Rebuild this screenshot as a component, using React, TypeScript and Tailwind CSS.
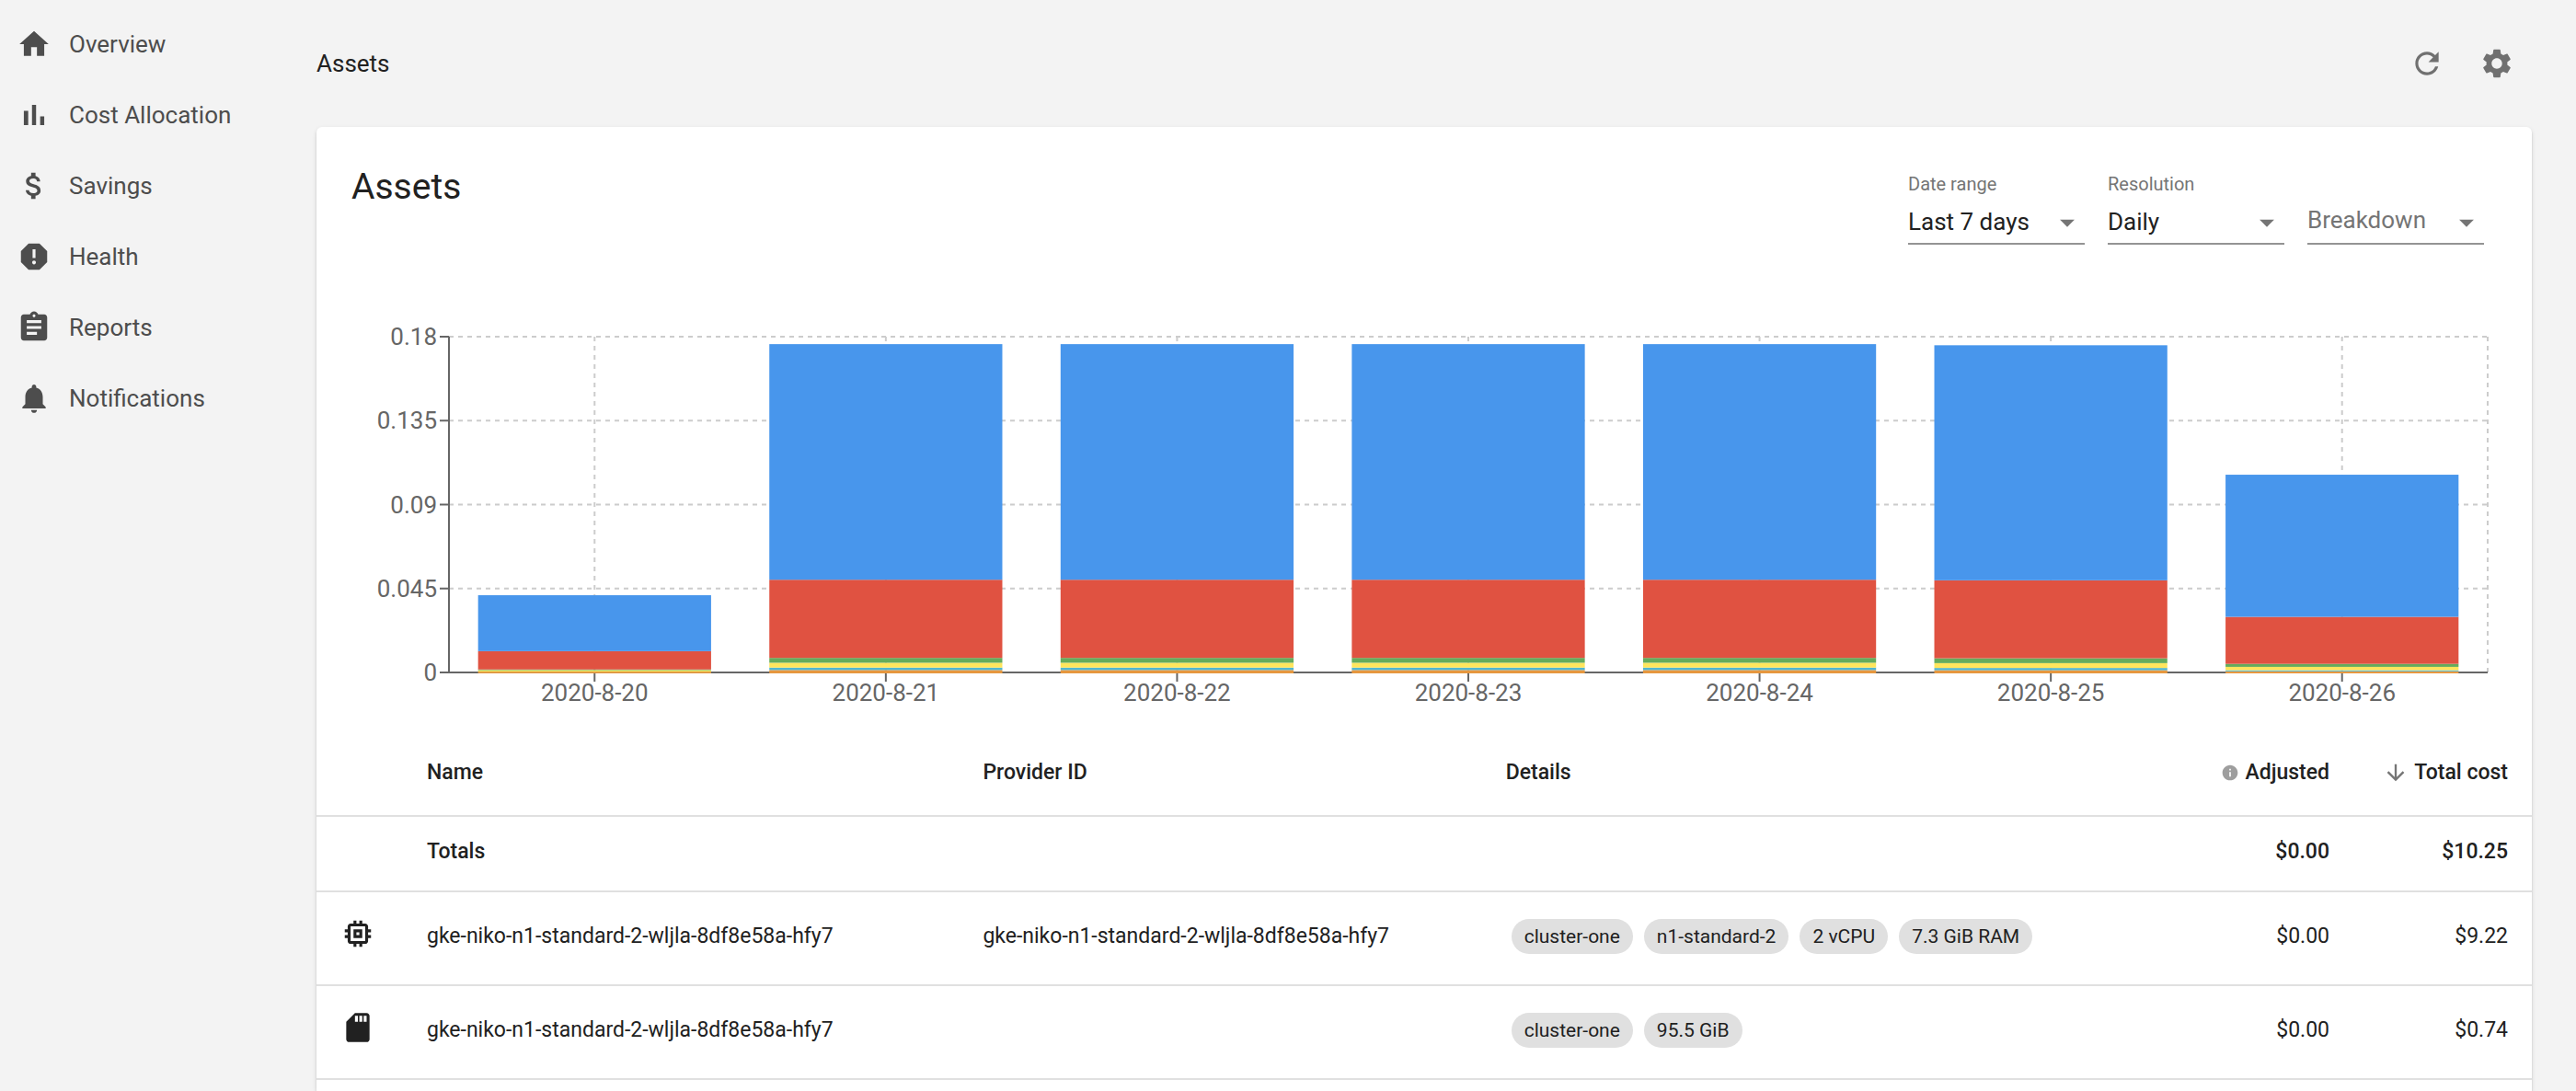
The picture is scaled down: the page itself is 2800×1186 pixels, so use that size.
import React from "react";

const PATHS = {
  home: "M10 20v-6h4v6h5v-8h3L12 3 2 12h3v8z",
  bars: "M5 9.2h3V19H5zM10.6 5h2.8v14h-2.8zm5.6 8H19v6h-2.8z",
  money:
    "M11.8 10.9c-2.27-.59-3-1.2-3-2.15 0-1.09 1.01-1.85 2.7-1.85 1.78 0 2.44.85 2.5 2.1h2.21c-.07-1.72-1.12-3.3-3.21-3.81V3h-3v2.16c-1.94.42-3.5 1.68-3.5 3.61 0 2.31 1.91 3.46 4.7 4.13 2.5.6 3 1.48 3 2.41 0 .69-.49 1.79-2.7 1.79-2.06 0-2.87-.92-2.98-2.1h-2.2c.12 2.19 1.76 3.42 3.68 3.83V21h3v-2.15c1.95-.37 3.5-1.5 3.5-3.55 0-2.84-2.43-3.81-4.7-4.4z",
  report:
    "M15.73 3H8.27L3 8.27v7.46L8.27 21h7.46L21 15.73V8.27L15.73 3zM12 17.3c-.72 0-1.3-.58-1.3-1.3 0-.72.58-1.3 1.3-1.3.72 0 1.3.58 1.3 1.3 0 .72-.58 1.3-1.3 1.3zm1-4.3h-2V7h2v6z",
  assignment:
    "M19 3h-4.18C14.4 1.84 13.3 1 12 1c-1.3 0-2.4.84-2.82 2H5c-1.1 0-2 .9-2 2v14c0 1.1.9 2 2 2h14c1.1 0 2-.9 2-2V5c0-1.1-.9-2-2-2zm-7 0c.55 0 1 .45 1 1s-.45 1-1 1-1-.45-1-1 .45-1 1-1zm2 14H7v-2h7v2zm3-4H7v-2h10v2zm0-4H7V7h10v2z",
  bell: "M12 22c1.1 0 2-.9 2-2h-4c0 1.1.89 2 2 2zm6-6v-5c0-3.07-1.64-5.64-4.5-6.32V4c0-.83-.67-1.5-1.5-1.5s-1.5.67-1.5 1.5v.68C7.63 5.36 6 7.92 6 11v5l-2 2v1h16v-1l-2-2z",
  refresh:
    "M17.65 6.35C16.2 4.9 14.21 4 12 4c-4.42 0-7.99 3.58-7.99 8s3.57 8 7.99 8c3.73 0 6.84-2.55 7.73-6h-2.08c-.82 2.33-3.04 4-5.65 4-3.31 0-6-2.69-6-6s2.69-6 6-6c1.66 0 3.14.69 4.22 1.78L13 11h7V4l-2.35 2.35z",
  settings:
    "M19.14,12.94c0.04-0.3,0.06-0.61,0.06-0.94c0-0.32-0.02-0.64-0.07-0.94l2.03-1.58c0.18-0.14,0.23-0.41,0.12-0.61l-1.92-3.32c-0.12-0.22-0.37-0.29-0.59-0.22l-2.39,0.96c-0.5-0.38-1.03-0.7-1.62-0.94L14.4,2.81c-0.04-0.24-0.24-0.41-0.48-0.41h-3.84c-0.24,0-0.43,0.17-0.47,0.41L9.25,5.35C8.66,5.59,8.12,5.92,7.63,6.29L5.24,5.33c-0.22-0.08-0.47,0-0.59,0.22L2.74,8.87C2.62,9.08,2.66,9.34,2.86,9.48l2.03,1.58C4.84,11.36,4.8,11.69,4.8,12s0.02,0.64,0.07,0.94l-2.03,1.58c-0.18,0.14-0.23,0.41-0.12,0.61l1.92,3.32c0.12,0.22,0.37,0.29,0.59,0.22l2.39-0.96c0.5,0.38,1.03,0.7,1.62,0.94l0.36,2.54c0.05,0.24,0.24,0.41,0.48,0.41h3.84c0.24,0,0.44-0.17,0.47-0.41l0.36-2.54c0.59-0.24,1.13-0.56,1.62-0.94l2.39,0.96c0.22,0.08,0.47,0,0.59-0.22l1.92-3.32c0.12-0.22,0.07-0.47-0.12-0.61L19.14,12.94z M12,15.6c-1.98,0-3.6-1.62-3.6-3.6s1.62-3.6,3.6-3.6s3.6,1.62,3.6,3.6S13.98,15.6,12,15.6z",
  dropDown: "M7 10l5 5 5-5z",
  info: "M12 2C6.48 2 2 6.48 2 12s4.48 10 10 10 10-4.48 10-10S17.52 2 12 2zm1 15h-2v-6h2v6zm0-8h-2V7h2v2z",
  arrowDown: "M20 12l-1.41-1.41L13 16.17V4h-2v12.17l-5.58-5.59L4 12l8 8 8-8z",
  memory:
    "M15 9H9v6h6V9zm-2 4h-2v-2h2v2zm8-2V9h-2V7c0-1.1-.9-2-2-2h-2V3h-2v2h-2V3H9v2H7c-1.1 0-2 .9-2 2v2H3v2h2v2H3v2h2v2c0 1.1.9 2 2 2h2v2h2v-2h2v2h2v-2h2c1.1 0 2-.9 2-2v-2h2v-2h-2v-2h2zm-4 6H7V7h10v10z",
  sdCard:
    "M18 2h-8L4.02 8 4 20c0 1.1.9 2 2 2h12c1.1 0 2-.9 2-2V4c0-1.1-.9-2-2-2zm-6 6h-2V4h2v4zm3 0h-2V4h2v4zm3 0h-2V4h2v4z",
};

type IconName = keyof typeof PATHS;

function Icon({ name, className = "size-[38px]" }: { name: IconName; className?: string }) {
  return (
    <svg viewBox="0 0 24 24" fill="currentColor" aria-hidden="true" className={`shrink-0 ${className}`}>
      <path d={PATHS[name]} />
    </svg>
  );
}

const NAV: { icon: IconName; label: string }[] = [
  { icon: "home", label: "Overview" },
  { icon: "bars", label: "Cost Allocation" },
  { icon: "money", label: "Savings" },
  { icon: "report", label: "Health" },
  { icon: "assignment", label: "Reports" },
  { icon: "bell", label: "Notifications" },
];

function Sidebar() {
  return (
    <nav className="w-[344px] shrink-0 pt-[9px]">
      <ul>
        {NAV.map((item) => (
          <li key={item.label}>
            <a href="#" className="flex h-[77px] items-center gap-[19px] px-[18px] text-[#4d4d4d]">
              <Icon name={item.icon} />
              {item.label}
            </a>
          </li>
        ))}
      </ul>
    </nav>
  );
}

function Select({ id, label, options }: { id: string; label: string; options: string[] }) {
  return (
    <div className="w-[192px]">
      <label htmlFor={id} className="block h-6 text-[20px] leading-6 text-[#757575]">
        {label}
      </label>
      <div className="relative mt-2">
        <select
          id={id}
          className="h-[46px] w-full appearance-none rounded-none border-b-2 border-[#949494] bg-transparent pb-[2px] text-[#212121] outline-none"
        >
          {options.map((o) => (
            <option key={o}>{o}</option>
          ))}
        </select>
        <span className="pointer-events-none absolute top-[3px] right-0 text-[#757575]">
          <Icon name="dropDown" />
        </span>
      </div>
    </div>
  );
}

function BreakdownSelect() {
  return (
    <div className="w-[192px] pt-8">
      <div className="relative">
        <select
          aria-label="Breakdown"
          className="h-[46px] w-full appearance-none rounded-none border-b-2 border-[#949494] bg-transparent pb-[6px] text-[#757575] outline-none"
        >
          <option>Breakdown</option>
        </select>
        <span className="pointer-events-none absolute top-[3px] right-0 text-[#757575]">
          <Icon name="dropDown" />
        </span>
      </div>
    </div>
  );
}

const PLOT_HEIGHT = 365;
const Y_MAX = 0.18;
const COLORS = ["#e6973f", "#4fb6cf", "#ffe65c", "#65ac5b", "#e05241", "#4896ec"];

// Daily cost, stacked from the bottom up in the order of COLORS.
const DAYS: { date: string; values: number[] }[] = [
  { date: "2020-8-20", values: [0.0004, 0, 0.0008, 0.0004, 0.0098, 0.03] },
  { date: "2020-8-21", values: [0.0013, 0.0013, 0.0026, 0.0026, 0.0419, 0.1263] },
  { date: "2020-8-22", values: [0.0013, 0.0013, 0.0026, 0.0026, 0.0419, 0.1263] },
  { date: "2020-8-23", values: [0.0013, 0.0013, 0.0026, 0.0026, 0.0419, 0.1263] },
  { date: "2020-8-24", values: [0.0013, 0.0013, 0.0026, 0.0026, 0.0419, 0.1263] },
  { date: "2020-8-25", values: [0.0012, 0.0012, 0.0026, 0.0026, 0.0418, 0.126] },
  { date: "2020-8-26", values: [0.0006, 0.0006, 0.0018, 0.0016, 0.0252, 0.0762] },
];

const Y_TICKS = ["0.18", "0.135", "0.09", "0.045", "0"];

function Chart() {
  const slot = 100 / DAYS.length;
  const toY = (v: number) => PLOT_HEIGHT * (1 - v / Y_MAX);
  const columns = [0, ...DAYS.map((_, i) => (i + 0.5) * slot), 100];

  return (
    <div className="mt-[100px] mr-12 ml-36">
      <svg className="block h-[404px] w-full overflow-visible" role="img" aria-label="Asset cost per day">
        <g stroke="#cccccc" strokeWidth="2" strokeDasharray="5 5">
          {Y_TICKS.map((t) => (
            <line key={t} x1="0" x2="100%" y1={toY(Number(t))} y2={toY(Number(t))} />
          ))}
          {columns.map((x) => (
            <line key={x} x1={`${x}%`} x2={`${x}%`} y1="0" y2={PLOT_HEIGHT} />
          ))}
        </g>
        <g stroke="#666666" strokeWidth="2">
          <line x1="0" x2="100%" y1={PLOT_HEIGHT} y2={PLOT_HEIGHT} />
          <line x1="0" x2="0" y1="0" y2={PLOT_HEIGHT} />
          {Y_TICKS.map((t) => (
            <line key={t} x1="-10" x2="0" y1={toY(Number(t))} y2={toY(Number(t))} />
          ))}
          {DAYS.map((d, i) => (
            <line
              key={d.date}
              x1={`${(i + 0.5) * slot}%`}
              x2={`${(i + 0.5) * slot}%`}
              y1={PLOT_HEIGHT}
              y2={PLOT_HEIGHT + 10}
            />
          ))}
        </g>
        {DAYS.map((d, i) => {
          let base = 0;
          return (
            <g key={d.date}>
              {d.values.map((v, k) => {
                base += v;
                return (
                  <rect
                    key={COLORS[k]}
                    x={`${(i + 0.1) * slot}%`}
                    width={`${slot * 0.8}%`}
                    y={toY(base)}
                    height={toY(0) - toY(v) + (k === 0 ? 1 : 0)}
                    fill={COLORS[k]}
                  />
                );
              })}
            </g>
          );
        })}
        <g className="fill-[#666666]">
          {Y_TICKS.map((t) => (
            <text key={t} x="-13" y={toY(Number(t)) + 9} textAnchor="end">
              {t}
            </text>
          ))}
          {DAYS.map((d, i) => (
            <text key={d.date} x={`${(i + 0.5) * slot}%`} y={PLOT_HEIGHT + 31} textAnchor="middle">
              {d.date}
            </text>
          ))}
        </g>
      </svg>
    </div>
  );
}

const ROWS: { icon: IconName; name: string; provider: string; chips: string[]; adjusted: string; total: string }[] = [
  {
    icon: "memory",
    name: "gke-niko-n1-standard-2-wljla-8df8e58a-hfy7",
    provider: "gke-niko-n1-standard-2-wljla-8df8e58a-hfy7",
    chips: ["cluster-one", "n1-standard-2", "2 vCPU", "7.3 GiB RAM"],
    adjusted: "$0.00",
    total: "$9.22",
  },
  {
    icon: "sdCard",
    name: "gke-niko-n1-standard-2-wljla-8df8e58a-hfy7",
    provider: "",
    chips: ["cluster-one", "95.5 GiB"],
    adjusted: "$0.00",
    total: "$0.74",
  },
];

function AssetsTable() {
  return (
    <table className="mt-7 w-full table-fixed text-left text-[23px] leading-8">
      <colgroup>
        <col className="w-[94px]" />
        <col className="w-[25.1%]" />
        <col className="w-[23.6%]" />
        <col />
        <col className="w-[200px]" />
        <col className="w-[194px]" />
      </colgroup>
      <thead>
        <tr className="border-b-2 border-[#e0e0e0] [&>th]:px-[26px] [&>th]:pt-[26px] [&>th]:pb-[30px] [&>th]:font-medium [&>th]:whitespace-nowrap">
          <th aria-label="Type" />
          <th>Name</th>
          <th>Provider ID</th>
          <th>Details</th>
          <th>
            <span className="flex items-center justify-end gap-[6px]">
              <span className="text-[#9e9e9e]">
                <Icon name="info" className="size-5" />
              </span>
              Adjusted
            </span>
          </th>
          <th>
            <button type="button" className="flex w-full items-center justify-end gap-[6px]">
              <span className="text-[#757575]">
                <Icon name="arrowDown" className="size-7" />
              </span>
              Total cost
            </button>
          </th>
        </tr>
      </thead>
      <tbody>
        <tr className="border-b-2 border-[#e0e0e0] font-medium [&>td]:px-[26px] [&>td]:pt-[22px] [&>td]:pb-[26px]">
          <td />
          <td>Totals</td>
          <td />
          <td />
          <td className="text-right">$0.00</td>
          <td className="text-right">$10.25</td>
        </tr>
        {ROWS.map((row) => (
          <tr key={row.icon} className="h-[102px] border-b-2 border-[#e0e0e0] [&>td]:px-[26px] [&>td]:pb-1">
            <td>
              <span className="block pb-[6px]">
                <Icon name={row.icon} />
              </span>
            </td>
            <td>{row.name}</td>
            <td>{row.provider}</td>
            <td>
              <ul className="flex gap-3 pl-[6px]">
                {row.chips.map((c) => (
                  <li key={c} className="h-[38px] rounded-full bg-[#e0e0e0] px-[14px] text-[21px] leading-[38px] whitespace-nowrap">
                    {c}
                  </li>
                ))}
              </ul>
            </td>
            <td className="text-right">{row.adjusted}</td>
            <td className="text-right">{row.total}</td>
          </tr>
        ))}
      </tbody>
    </table>
  );
}

export default function App() {
  return (
    <div className="flex min-h-screen bg-[#f3f3f3] font-[Roboto,sans-serif] text-[26px] leading-8 text-[#212121]">
      <Sidebar />
      <main className="flex min-w-0 flex-1 flex-col pr-12">
        <header className="flex h-[138px] items-center justify-between">
          <a href="#">Assets</a>
          <div className="flex text-[#707070]">
            <button type="button" aria-label="Refresh" className="p-[19px]">
              <Icon name="refresh" />
            </button>
            <button type="button" aria-label="Settings" className="p-[19px]">
              <Icon name="settings" />
            </button>
          </div>
        </header>
        <section className="flex-1 rounded-t-md bg-white shadow-[0_2px_2px_rgba(0,0,0,0.14),0_2px_5px_rgba(0,0,0,0.12)]">
          <div className="flex justify-between pt-10 pr-[52px] pl-[38px]">
            <h1 className="text-[39px] leading-[50px]">Assets</h1>
            <div className="flex gap-[25px] pt-[10px]">
              <Select id="range" label="Date range" options={["Last 7 days"]} />
              <Select id="resolution" label="Resolution" options={["Daily"]} />
              <BreakdownSelect />
            </div>
          </div>
          <Chart />
          <AssetsTable />
        </section>
      </main>
    </div>
  );
}
